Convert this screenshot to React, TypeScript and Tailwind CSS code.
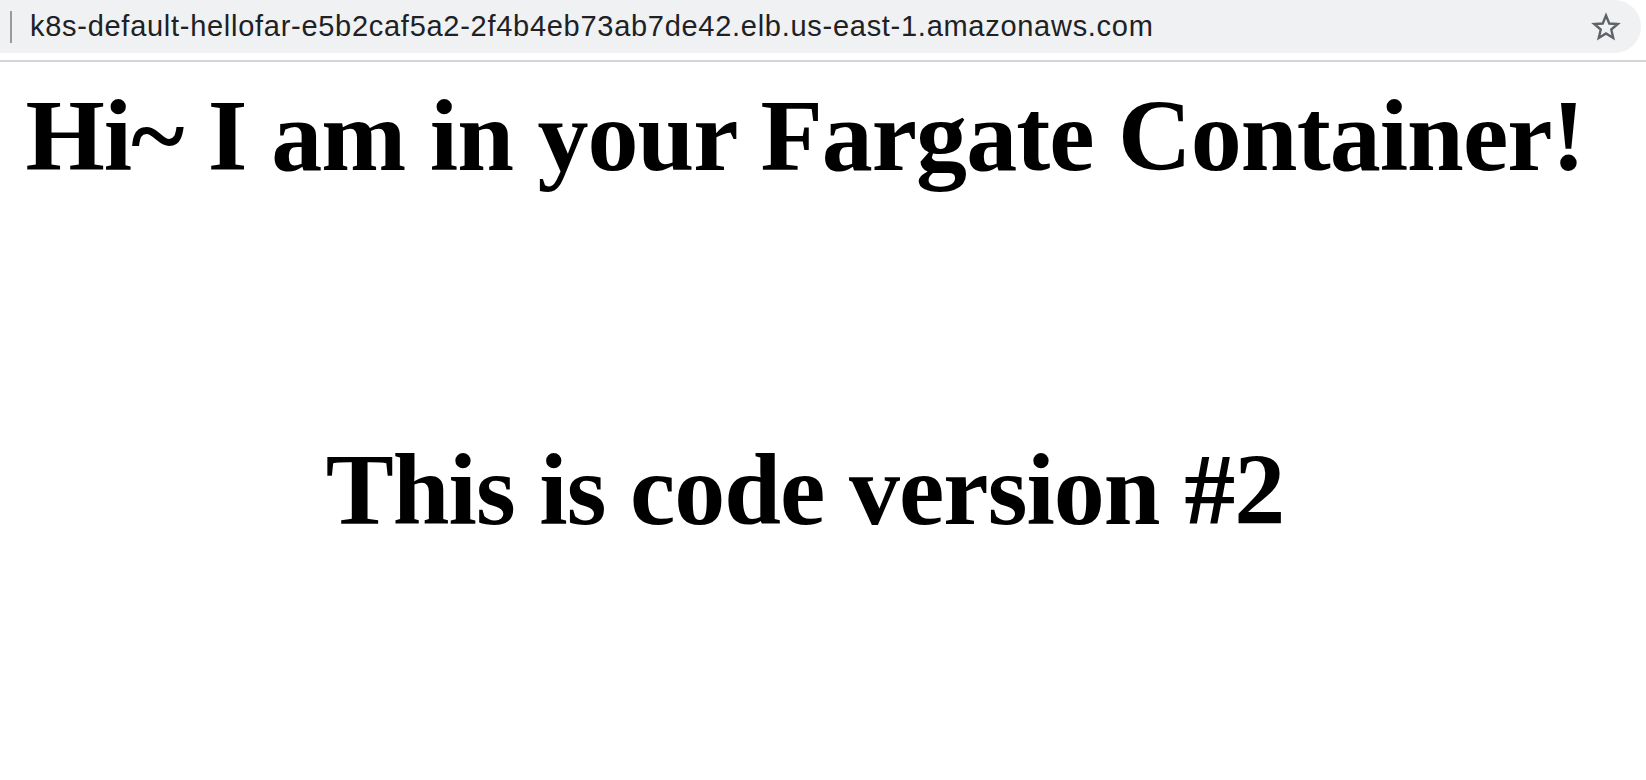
import React from 'react';

const StarIcon: React.FC = () => (
  <svg width="30" height="30" viewBox="0 0 24 24" fill="none">
    <polygon
      points="12,2.8 14.6,9.2 21.4,9.6 16.2,14 17.8,20.8 12,17.1 6.2,20.8 7.8,14 2.6,9.6 9.4,9.2"
      stroke="#5f6368"
      strokeWidth="1.9"
      strokeLinejoin="miter"
    />
  </svg>
);

const App: React.FC = () => {
  return (
    <div className="flex flex-col min-h-screen bg-white">
      <div className="h-[53px] w-[1641px] bg-[#f0f1f3] rounded-r-full flex items-center">
        <div className="ml-[10px] w-[2px] h-[32px] bg-[#9a9a9e]"></div>
        <p className="ml-[18px] text-[29px] text-[#202124] font-['Liberation_Sans',Arial,sans-serif] tracking-[0.72px]">
          k8s-default-hellofar-e5b2caf5a2-2f4b4eb73ab7de42.elb.us-east-1.amazonaws.com
        </p>
        <div className="ml-auto mr-[20px] flex items-center">
          <StarIcon />
        </div>
      </div>
      <div className="h-[7px]"></div>
      <div className="h-[2px] bg-[#d5d5d8]"></div>

      <main className="w-[1610px] text-center font-['Liberation_Serif','Times_New_Roman',serif] text-black tracking-[-0.95px]">
        <h1 className="mt-[23px] text-[102px] leading-none font-bold">Hi~ I am in your Fargate Container!</h1>
        <h2 className="mt-[252px] text-[102px] leading-none font-bold">This is code version #2</h2>
      </main>
    </div>
  );
};

export default App;
